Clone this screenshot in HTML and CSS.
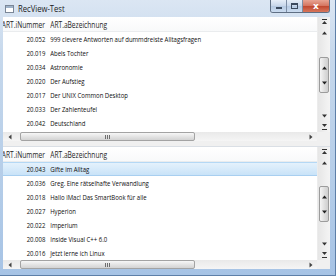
FILE: index.html
```html
<html lang="de">
<head>
    <meta charset="UTF-8">
    <title>RecView-Test</title>
    <link rel="stylesheet" href="styles.css">
</head>
<body>
<div class="window">
    <div class="titlebar">
        <span class="appicon"><span class="appbar"></span></span>
        <span class="title">RecView-Test</span>
        <div class="caption">
            <span class="btn min"><span class="dash"></span></span>
            <span class="btn max"><span class="box"></span></span>
            <span class="btn close">x</span>
        </div>
    </div>
    <div class="client">
        <div class="pane">
            <div class="list">
                <div class="head"><span class="num"><span>ART.iNummer</span></span><span class="txt">ART.aBezeichnung</span></div>
                <div class="row"><span class="num"><span>20.052</span></span><span class="txt">999 clevere Antworten auf dummdreiste Alltagsfragen</span></div>
                <div class="row"><span class="num"><span>20.019</span></span><span class="txt">Abels Tochter</span></div>
                <div class="row"><span class="num"><span>20.034</span></span><span class="txt">Astronomie</span></div>
                <div class="row"><span class="num"><span>20.020</span></span><span class="txt">Der Aufstieg</span></div>
                <div class="row"><span class="num"><span>20.017</span></span><span class="txt">Der UNIX Common Desktop</span></div>
                <div class="row"><span class="num"><span>20.033</span></span><span class="txt">Der Zahlenteufel</span></div>
                <div class="row"><span class="num"><span>20.042</span></span><span class="txt">Deutschland</span></div>
            </div>
            <div class="vscroll">
                <span class="vbtn"><svg width="7" height="6" viewBox="0 0 7 6"><rect x="1" y="0" width="5" height="1" fill="#333"/><path d="M3.5 2 L6 5 L1 5 Z" fill="#333"/></svg></span>
                <span class="vbtn"><svg width="7" height="4" viewBox="0 0 7 4"><path d="M3.5 0.5 L6 3.5 L1 3.5 Z" fill="#333"/></svg></span>
                <span class="track"></span>
                <span class="thumb">
                    <svg width="7" height="4" viewBox="0 0 7 4"><path d="M3.5 0.5 L6 3.5 L1 3.5 Z" fill="#222"/></svg>
                    <svg width="7" height="4" viewBox="0 0 7 4"><path d="M1 0.5 L6 0.5 L3.5 3.5 Z" fill="#222"/></svg>
                </span>
                <span class="track"></span>
                <span class="vbtn"><svg width="7" height="4" viewBox="0 0 7 4"><path d="M1 0.5 L6 0.5 L3.5 3.5 Z" fill="#333"/></svg></span>
                <span class="vbtn"><svg width="7" height="6" viewBox="0 0 7 6"><path d="M1 0 L6 0 L3.5 3 Z" fill="#333"/><rect x="1" y="5" width="5" height="1" fill="#333"/></svg></span>
            </div>
            <div class="hscroll">
                <span class="hbtn"><svg width="4" height="6" viewBox="0 0 4 6"><path d="M3.5 0.5 L3.5 5.5 L0.5 3 Z" fill="#444"/></svg></span>
                <span class="hthumb"><span class="grip"></span></span>
                <span class="htrack"></span>
                <span class="hbtn"><svg width="4" height="6" viewBox="0 0 4 6"><path d="M0.5 0.5 L0.5 5.5 L3.5 3 Z" fill="#444"/></svg></span>
            </div>
            <div class="corner"></div>
        </div>
        <div class="splitter"></div>
        <div class="pane low">
            <div class="list">
                <div class="head"><span class="num"><span>ART.iNummer</span></span><span class="txt">ART.aBezeichnung</span></div>
                <div class="row sel"><span class="num"><span>20.043</span></span><span class="txt">Gifte im Alltag</span></div>
                <div class="row"><span class="num"><span>20.036</span></span><span class="txt">Greg. Eine rätselhafte Verwandlung</span></div>
                <div class="row"><span class="num"><span>20.018</span></span><span class="txt">Hallo iMac! Das SmartBook für alle</span></div>
                <div class="row"><span class="num"><span>20.027</span></span><span class="txt">Hyperion</span></div>
                <div class="row"><span class="num"><span>20.022</span></span><span class="txt">Imperium</span></div>
                <div class="row"><span class="num"><span>20.008</span></span><span class="txt">Inside Visual C++ 6.0</span></div>
                <div class="row"><span class="num"><span>20.016</span></span><span class="txt">Jetzt lerne ich Linux</span></div>
            </div>
            <div class="vscroll">
                <span class="vbtn"><svg width="7" height="6" viewBox="0 0 7 6"><rect x="1" y="0" width="5" height="1" fill="#333"/><path d="M3.5 2 L6 5 L1 5 Z" fill="#333"/></svg></span>
                <span class="vbtn"><svg width="7" height="4" viewBox="0 0 7 4"><path d="M3.5 0.5 L6 3.5 L1 3.5 Z" fill="#333"/></svg></span>
                <span class="track"></span>
                <span class="thumb">
                    <svg width="7" height="4" viewBox="0 0 7 4"><path d="M3.5 0.5 L6 3.5 L1 3.5 Z" fill="#222"/></svg>
                    <svg width="7" height="4" viewBox="0 0 7 4"><path d="M1 0.5 L6 0.5 L3.5 3.5 Z" fill="#222"/></svg>
                </span>
                <span class="track"></span>
                <span class="vbtn"><svg width="7" height="4" viewBox="0 0 7 4"><path d="M1 0.5 L6 0.5 L3.5 3.5 Z" fill="#333"/></svg></span>
                <span class="vbtn"><svg width="7" height="6" viewBox="0 0 7 6"><path d="M1 0 L6 0 L3.5 3 Z" fill="#333"/><rect x="1" y="5" width="5" height="1" fill="#333"/></svg></span>
            </div>
            <div class="hscroll">
                <span class="hbtn"><svg width="4" height="6" viewBox="0 0 4 6"><path d="M3.5 0.5 L3.5 5.5 L0.5 3 Z" fill="#444"/></svg></span>
                <span class="hthumb"><span class="grip"></span></span>
                <span class="htrack"></span>
                <span class="hbtn"><svg width="4" height="6" viewBox="0 0 4 6"><path d="M0.5 0.5 L0.5 5.5 L3.5 3 Z" fill="#444"/></svg></span>
            </div>
            <div class="corner"></div>
        </div>
    </div>
</div>
</body>
</html>
```

FILE: styles.css
```css
* { box-sizing: border-box; }
body { margin: 0; font-family: "Open Sans", "Noto Sans", sans-serif; }

/* window frame */
.window { width: 336px; height: 276px; display: flex; flex-direction: column; padding: 0 5px 6px 3px;
  background: linear-gradient(#dbe6f3, #c6d8ec 20%, #b3cce8 70%, #a6c3e5);
  border-right: 1px solid #5d7fa8; border-bottom: 1px solid #5d7fa8; }
.titlebar { height: 17px; flex: none; display: flex; align-items: center; }
.appicon { width: 9px; height: 8px; margin-left: 2px; border: 1px solid #7b8797; background: #fff; }
.appbar { display: block; height: 2px; background: #9fb3c9; }
.title { margin-left: 4px; font-size: 8.5px; color: #1a1a1a; display: inline-block; transform: scaleX(.9); transform-origin: 0 50%; }
.caption { margin-left: auto; align-self: flex-start; display: flex; height: 13px;
  border: 1px solid #5f6f84; border-top: none; border-radius: 0 0 3px 3px; overflow: hidden; }
.btn { display: flex; align-items: center; justify-content: center; height: 100%; }
.min, .max { width: 16px; background: linear-gradient(#e6eef8, #c7d6ea 50%, #b5c9e2 51%, #cbdcf0); border-right: 1px solid #7d8ea5; }
.close { width: 26px; background: linear-gradient(#e8a493, #d4735e 50%, #c0462e 51%, #d8775c); color: #fff;
  font-family: "DejaVu Sans", sans-serif; font-size: 9px; font-weight: bold; line-height: 1; }
.dash { width: 6px; height: 2px; background: #fff; border: 1px solid #3b4a5e; margin-top: 4px; }
.box { width: 7px; height: 6px; border: 1px solid #3b4a5e; border-top-width: 2px; background: transparent; }

/* client area */
.client { flex: 1; display: flex; flex-direction: column; background: #f0f0f0; }
.pane { height: 124px; flex: none; display: grid; grid-template-columns: 1fr 13px; grid-template-rows: 1fr 9px; }
.pane.low { height: auto; flex: 1; }
.splitter { height: 6px; flex: none; background: #f0f0f0; border-bottom: 1px solid #dadfe5; }

/* list text is narrower than tall, as in the captured window */
.list { background: #fff; overflow: hidden; font-size: 7.5px; color: #0e0e0e; }
.head { height: 15px; display: flex; align-items: center; background: linear-gradient(#fff, #f8f9fa); border-bottom: 1px solid #eaecee; color: #1e1e1e; font-size: 8.3px; }
.row { height: 14px; display: flex; align-items: center; white-space: nowrap; }
.row.sel { background: linear-gradient(#e4f1fc, #c9e3f8); border-top: 1px solid #b4d8f5; border-bottom: 1px solid #a8cff0; }
.num { width: 44px; flex: none; display: flex; justify-content: flex-end; padding-right: 2px; white-space: nowrap; }
.num span { display: inline-block; transform: scaleX(.8); transform-origin: 100% 50%; }
.txt { display: inline-block; padding-left: 4px; white-space: nowrap; transform: scaleX(.8); transform-origin: 0 50%; }

/* vertical scrollbar */
.vscroll { display: flex; flex-direction: column; background: linear-gradient(to right, #e6e6e6, #f4f4f4); border-left: 1px solid #ececec; }
.vbtn { height: 10px; flex: none; display: flex; align-items: center; justify-content: center; }
.vbtn + .vbtn { height: 11px; }
.track { flex: 1; }
.thumb { height: 36px; flex: none; margin: 0 1px; display: flex; flex-direction: column; justify-content: space-between; align-items: center;
  padding: 8px 0 7px; border: 1px solid #9c9c9c; border-radius: 2px; background: linear-gradient(to right, #f5f5f5, #dcdcdc 60%, #cfcfcf); }

/* horizontal scrollbar */
.hscroll { display: flex; align-items: stretch; background: linear-gradient(#e9e9e9, #f5f5f5); }
.hbtn { width: 13px; flex: none; display: flex; align-items: center; justify-content: center; }
.hthumb { width: 175px; margin: 0 0 0 4px; flex: none; display: flex; align-items: center; justify-content: center;
  border: 1px solid #a3a3a3; border-radius: 2px; background: linear-gradient(#f7f7f7, #e1e1e1 60%, #d3d3d3); }
.grip { width: 5px; height: 4px; background: repeating-linear-gradient(to right, #6e6e6e 0 1px, transparent 1px 2px); }
.htrack { flex: 1; }
.corner { background: #f0f0f0; }
```
